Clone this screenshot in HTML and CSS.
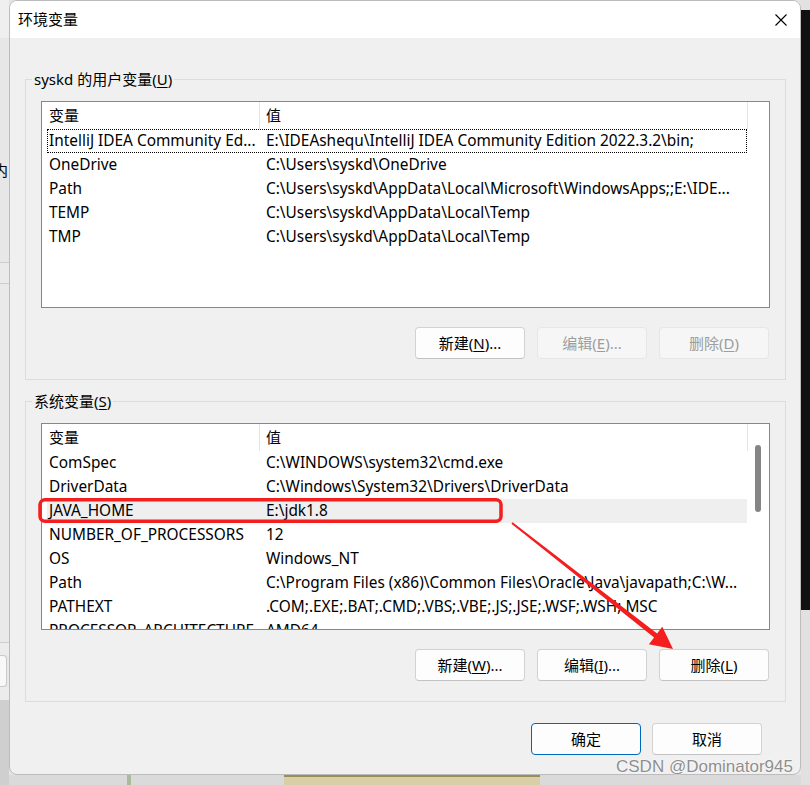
FILE: index.html
```html
<!DOCTYPE html>
<html lang="zh-CN">
<head>
<meta charset="utf-8">
<title>环境变量</title>
<link rel="stylesheet" href="styles.css">
</head>
<body>
<div class="screen">
  <div class="side-left">
    <div class="sl sl-a"></div>
    <div class="sl sl-b"></div>
    <div class="sl sl-char"><span>内</span></div>
    <div class="sl sl-c"></div>
    <div class="sl-line"></div>
    <div class="sl sl-d"></div>
    <div class="sl-line"></div>
    <div class="sl sl-e"></div>
    <div class="sl-line"></div>
    <div class="sl sl-f"></div>
    <div class="sl-btn"></div>
    <div class="sl sl-g"></div>
    <div class="sl sl-h"></div>
  </div>

  <div class="center">
    <div class="dialog">
      <div class="titlebar">
        <span class="title">环境变量</span>
        <svg class="close" width="12" height="12" viewBox="0 0 12 12"><path d="M0.5 0.5 L11.5 11.5 M11.5 0.5 L0.5 11.5" stroke="#000" stroke-width="1.1" fill="none"/></svg>
      </div>

      <fieldset class="group g1">
        <legend>syskd 的用户变量(<u>U</u>)</legend>
        <div class="list">
          <div class="table">
            <div class="hdr"><span class="hc1">变量</span><span class="hc2">值</span></div>
            <div class="row focus"><span class="c1">IntelliJ IDEA Community Ed...</span><span class="c2">E:\IDEAshequ\IntelliJ IDEA Community Edition 2022.3.2\bin;</span></div>
            <div class="row"><span class="c1">OneDrive</span><span class="c2">C:\Users\syskd\OneDrive</span></div>
            <div class="row"><span class="c1">Path</span><span class="c2">C:\Users\syskd\AppData\Local\Microsoft\WindowsApps;;E:\IDE...</span></div>
            <div class="row"><span class="c1">TEMP</span><span class="c2">C:\Users\syskd\AppData\Local\Temp</span></div>
            <div class="row"><span class="c1">TMP</span><span class="c2">C:\Users\syskd\AppData\Local\Temp</span></div>
          </div>
          <div class="vscroll"></div>
        </div>
        <div class="btns">
          <div class="btn">新建(<u>N</u>)...</div>
          <div class="btn dis">编辑(<u>E</u>)...</div>
          <div class="btn dis">删除(<u>D</u>)</div>
        </div>
      </fieldset>

      <fieldset class="group g2">
        <legend>系统变量(<u>S</u>)</legend>
        <div class="list">
          <div class="table">
            <div class="hdr"><span class="hc1">变量</span><span class="hc2">值</span></div>
            <div class="row"><span class="c1">ComSpec</span><span class="c2">C:\WINDOWS\system32\cmd.exe</span></div>
            <div class="row"><span class="c1">DriverData</span><span class="c2">C:\Windows\System32\Drivers\DriverData</span></div>
            <div class="row sel"><span class="c1">JAVA_HOME</span><span class="c2">E:\jdk1.8</span></div>
            <div class="row"><span class="c1">NUMBER_OF_PROCESSORS</span><span class="c2">12</span></div>
            <div class="row"><span class="c1">OS</span><span class="c2">Windows_NT</span></div>
            <div class="row"><span class="c1">Path</span><span class="c2">C:\Program Files (x86)\Common Files\Oracle\Java\javapath;C:\W...</span></div>
            <div class="row"><span class="c1">PATHEXT</span><span class="c2">.COM;.EXE;.BAT;.CMD;.VBS;.VBE;.JS;.JSE;.WSF;.WSH;.MSC</span></div>
            <div class="row"><span class="c1">PROCESSOR_ARCHITECTURE</span><span class="c2">AMD64</span></div>
          </div>
          <div class="vscroll"><div class="thumb"></div></div>
        </div>
        <div class="btns">
          <div class="btn">新建(<u>W</u>)...</div>
          <div class="btn">编辑(<u>I</u>)...</div>
          <div class="btn">删除(<u>L</u>)</div>
        </div>
      </fieldset>

      <div class="footer">
        <div class="btn def">确定</div>
        <div class="btn">取消</div>
      </div>
    </div>
    <div class="under">
      <div class="u-sp1"></div>
      <div class="u-green"></div>
      <div class="u-sp2"></div>
      <div class="u-beige"></div>
    </div>
  </div>

  <div class="side-right">
    <div class="sr-top"></div>
    <div class="sr-black"></div>
    <div class="sr-bottom"></div>
  </div>

  <svg class="annot" width="810" height="785" viewBox="0 0 810 785">
    <rect x="40" y="499.75" width="461" height="21.5" rx="5" ry="5" fill="none" stroke="#f41e1e" stroke-width="3.5"/>
    <polygon fill="#f41e1e" points="512.6,522.2 657.1,633.5 662.3,626.8 673,649 648.9,644.2 654.1,637.5 511.4,523.8"/>
  </svg>
  <div class="watermark">CSDN @Dominator945</div>
</div>
</body>
</html>
```

FILE: styles.css
```css
* { box-sizing: border-box; }
html, body { margin: 0; padding: 0; }
body {
  width: 810px;
  height: 785px;
  overflow: hidden;
  background: #e4e4e4;
  font-family: "Noto Sans", "Noto Sans CJK SC", sans-serif;
  font-size: 15px;
  color: #000;
}
u { text-decoration: underline; text-underline-offset: 2px; }

.screen {
  position: relative;
  display: flex;
  width: 810px;
  height: 785px;
}

/* left background strip (window behind) */
.side-left {
  width: 9px;
  flex: none;
  display: flex;
  flex-direction: column;
  background: #e8e8e8;
  overflow: hidden;
}
.sl-a { height: 38px; background: #efefef; }
.sl-b { height: 124px; background: #e7e7e7; }
.sl-char { height: 16px; background: #e7e7e7; line-height: 16px; white-space: nowrap; }
.sl-char span { display: inline-block; margin-left: -7px; font-size: 15px; }
.sl-c { height: 84px; background: #e7e7e7; }
.sl-line { height: 1px; background: #cdcdcd; }
.sl-d { height: 20px; background: #eaeaea; }
.sl-e { height: 358px; background: #e9e9e9; }
.sl-f { height: 12px; background: #ececec; }
.sl-btn {
  height: 32px;
  width: 7px;
  background: #f8f8f8;
  border: 1px solid #c9c9c9;
  border-left: none;
  border-radius: 0 4px 4px 0;
}
.sl-g { height: 13px; background: #ececec; }
.sl-h { flex: 1; background: #cfcfcf; }

/* right background strip */
.side-right {
  width: 9px;
  flex: none;
  display: flex;
  flex-direction: column;
}
.sr-top { height: 10px; background: #e2e2e2; }
.sr-black { height: 600px; background: #111; }
.sr-bottom { flex: 1; background: #e1e1e1; }

.center {
  width: 792px;
  flex: none;
  display: flex;
  flex-direction: column;
}

.dialog {
  height: 775px;
  flex: none;
  background: #f0f0f0;
  border: 1px solid #bcbcbc;
  border-radius: 8px;
  overflow: hidden;
  display: flex;
  flex-direction: column;
}

.titlebar {
  height: 37px;
  flex: none;
  background: #fff;
  display: flex;
  align-items: center;
  justify-content: space-between;
  padding: 0 13px 2px 8px;
}
.title { font-size: 15px; line-height: 20px; }
.close { display: block; margin-top: 2px; }

.group {
  margin: 0 14px 0 15px;
  padding: 12px 15px 20px;
  border: 1px solid #dcdcdc;
  min-inline-size: 0;
}
.g1 { margin-top: 31px; }
.g2 { margin-top: 11px; }
.group legend {
  padding: 0 2px;
  margin-left: -9px;
  line-height: 20px;
  font-size: 15px;
}

.list {
  height: 207px;
  border: 1px solid #828790;
  background: #fff;
  display: flex;
  overflow: hidden;
}
.table {
  width: 706px;
  flex: none;
  display: flex;
  flex-direction: column;
  overflow: hidden;
}
.hdr {
  display: flex;
  height: 27px;
  flex: none;
}
.hdr span { line-height: 27px; display: block; }
.hc1 { width: 218px; padding-left: 7px; border-right: 1px solid #e5e5e5; }
.hc2 { width: 488px; padding-left: 6px; border-right: 1px solid #e5e5e5; }

.row {
  display: flex;
  flex: none;
  height: 24px;
  line-height: 23px;
  margin-left: 5px;
  width: 700px;
  white-space: nowrap;
  font-size: 15.4px;
}
.row.focus { outline: 1px dotted #000; outline-offset: -1px; }
.row.sel { background: #efefef; }
.c1 { width: 213px; flex: none; padding-left: 2px; overflow: hidden; }
.c2 { flex: 1; padding-left: 6px; overflow: hidden; }

.vscroll { flex: 1; }
.thumb {
  width: 6px;
  height: 67px;
  margin: 21px 0 0 7px;
  background: #858585;
  border-radius: 3px;
}

.btns {
  display: flex;
  justify-content: flex-end;
  gap: 12px;
  margin-top: 19px;
  padding-right: 1px;
}
.btn {
  width: 110px;
  height: 32px;
  flex: none;
  border: 1px solid #d2d2d2;
  border-bottom-color: #c3c3c3;
  border-radius: 4px;
  background: #fdfdfd;
  display: flex;
  align-items: center;
  justify-content: center;
  font-size: 15px;
  line-height: 20px;
  white-space: nowrap;
}
.btn.dis {
  background: #f6f6f6;
  border-color: #e6e6e6;
  color: #9d9d9d;
}
.btn.def { border-color: #0067c0; }

.footer {
  display: flex;
  justify-content: flex-end;
  gap: 11px;
  margin: 21px 38px 0 0;
}

/* strip below the dialog */
.under {
  flex: 1;
  display: flex;
  background: #dadada;
}
.u-sp1 { width: 118px; }
.u-green { width: 4px; background: #a9b99a; }
.u-sp2 { width: 153px; }
.u-beige { width: 256px; background: #d9cfa6; border-top: 2px solid #9a8d5a; }

/* annotations drawn over the screenshot */
.annot {
  position: absolute;
  left: 0;
  top: 0;
  pointer-events: none;
}
.watermark {
  position: absolute;
  left: 616px;
  top: 757px;
  font-family: "Liberation Sans", Arial, sans-serif;
  font-size: 17px;
  line-height: 20px;
  color: #8e8e8e;
  text-shadow: 0 0 1px #fff, 0 0 2px #fff;
  white-space: nowrap;
}
```
